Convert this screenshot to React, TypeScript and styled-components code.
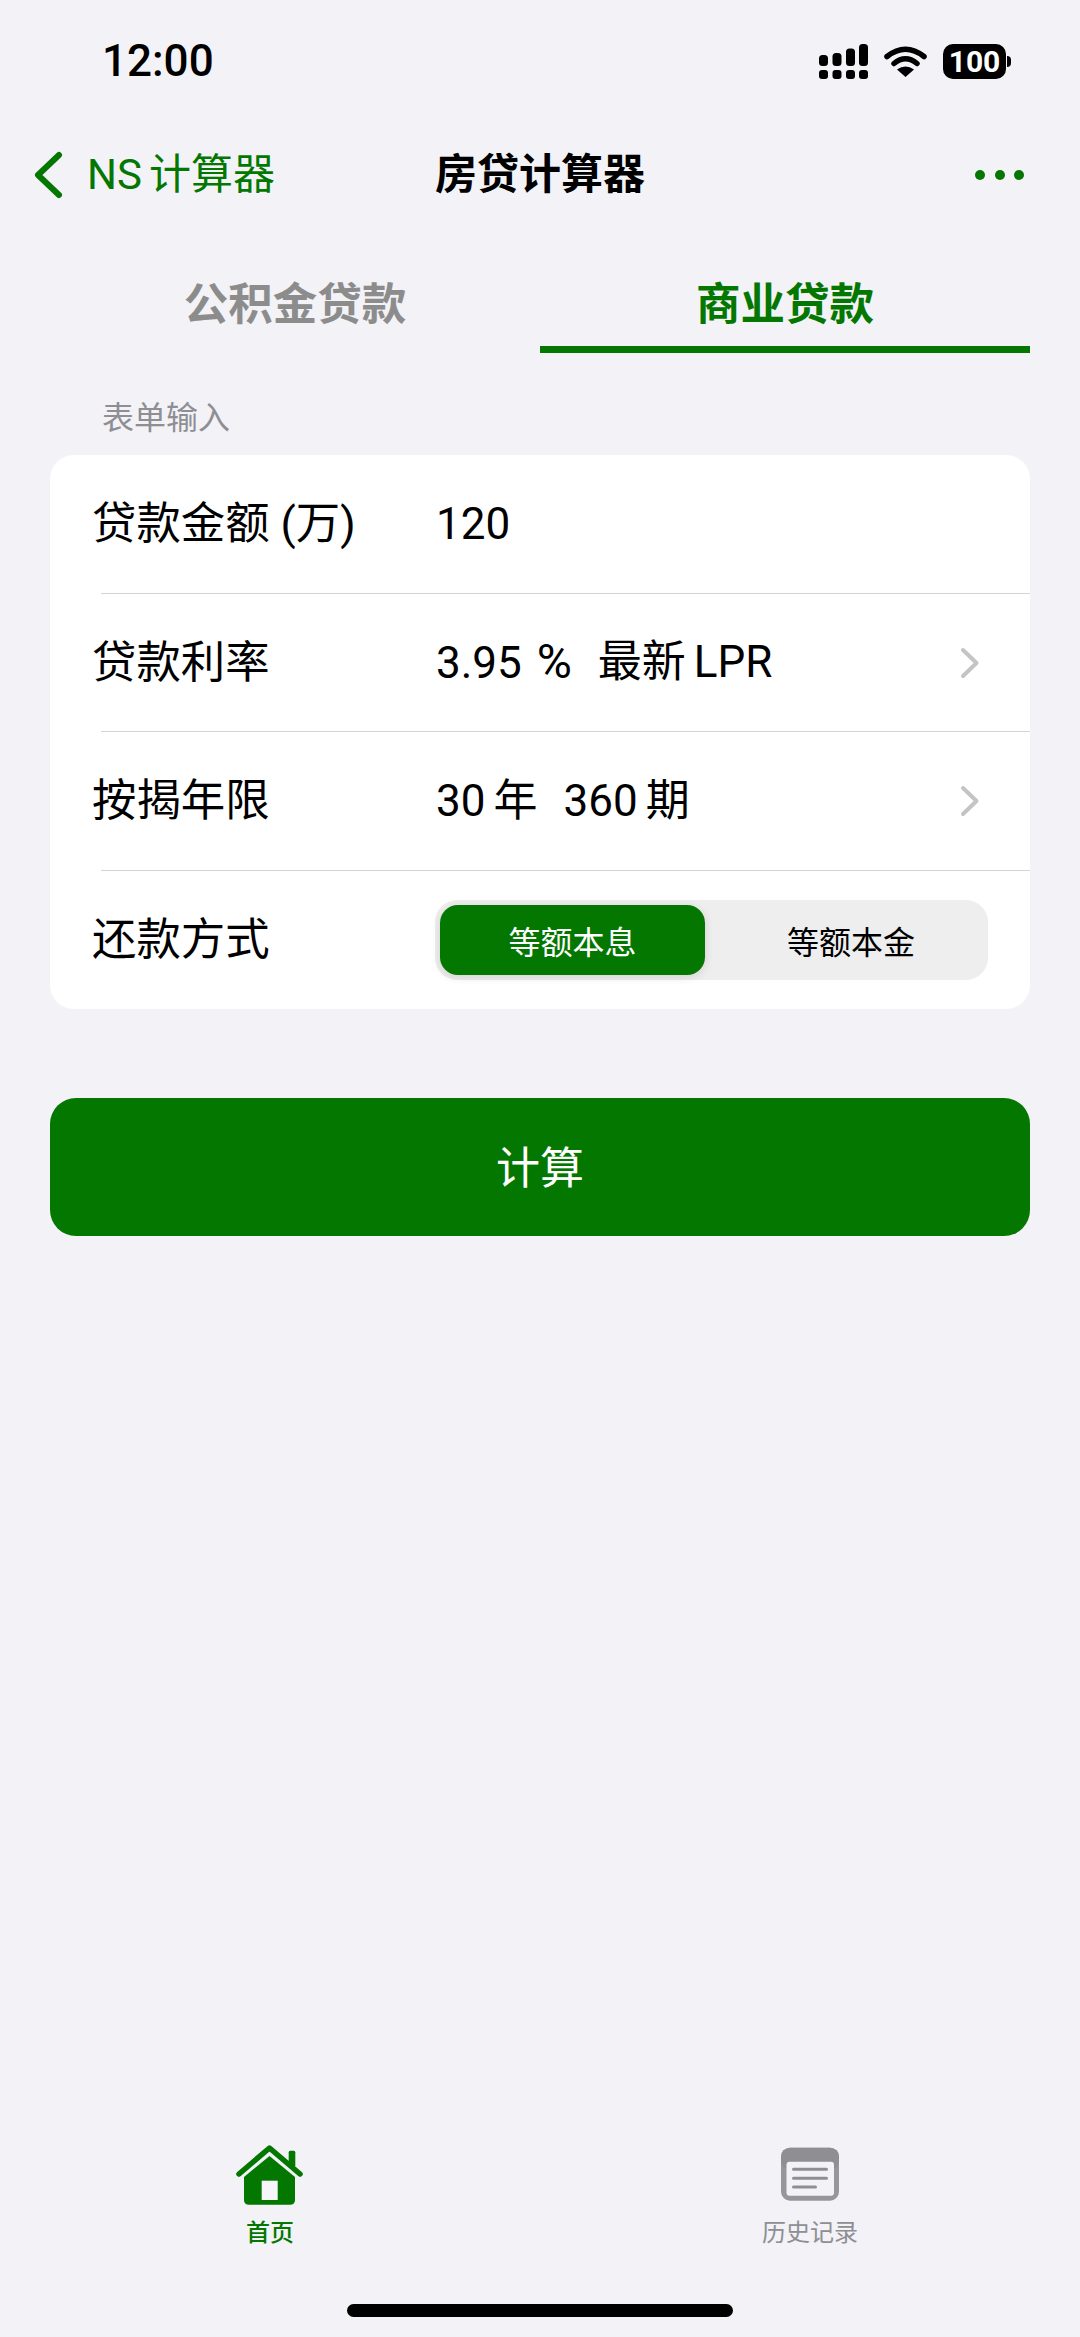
import React from "react";
import styled, { createGlobalStyle } from "styled-components";

const GREEN = "#037700";
const GRAY = "#8e8e93";

const Global = createGlobalStyle`
  html, body { margin: 0; padding: 0; background: #f2f2f7; }
  body { font-family: Roboto, "Noto Sans CJK SC", sans-serif; color: #000; }
  * { box-sizing: border-box; }
`;

const Page = styled.div`
  width: 1080px;
  height: 2337px;
  display: flex;
  flex-direction: column;
  overflow: hidden;
  background: #f2f2f7;
`;

const StatusBar = styled.div`
  height: 122px;
  padding: 0 74px 0 102px;
  display: flex;
  align-items: center;
  justify-content: space-between;
`;
const Time = styled.div`
  font-size: 44px;
  font-weight: 500;
  line-height: 52px;
`;
const StatusIcons = styled.div`
  display: flex;
  align-items: center;
  gap: 16px;
`;
const Battery = styled.div`
  position: relative;
  width: 63px;
  height: 35px;
  border-radius: 10px;
  background: #000;
  color: #fff;
  font-size: 30px;
  font-weight: 700;
  line-height: 35px;
  text-align: center;
  &::after {
    content: "";
    position: absolute;
    left: 64px;
    top: 12px;
    width: 4px;
    height: 11px;
    background: #000;
    border-radius: 0 5px 5px 0;
  }
`;

const Nav = styled.div`
  height: 106px;
  padding: 0 33px;
  display: grid;
  grid-template-columns: 1fr auto 1fr;
  align-items: center;
`;
const Back = styled.div`
  display: flex;
  align-items: center;
  gap: 24px;
  color: ${GREEN};
  font-size: 42px;
  line-height: 50px;
`;
const Title = styled.div`
  font-size: 42px;
  font-weight: 700;
  line-height: 50px;
`;
const Dots = styled.div`
  justify-self: end;
  margin-right: 23px;
  display: flex;
  gap: 9.5px;
`;
const Dot = styled.span`
  width: 10px;
  height: 10px;
  border-radius: 50%;
  background: ${GREEN};
`;
const Spaced = styled.span<{ $gap?: number }>`
  margin-left: ${(p) => p.$gap ?? 8}px;
`;

const Tabs = styled.div`
  margin: 0 50px;
  display: grid;
  grid-template-columns: 1fr 1fr;
`;
const Tab = styled.div<{ $active?: boolean }>`
  padding: 49px 0 13px;
  font-size: 44.5px;
  font-weight: 700;
  line-height: 56px;
  text-align: center;
  color: ${(p) => (p.$active ? GREEN : "#8c8c8c")};
  border-bottom: 7px solid ${(p) => (p.$active ? GREEN : "transparent")};
`;

const SectionLabel = styled.div`
  margin: 43px 0 15px;
  padding-left: 102px;
  font-size: 32px;
  line-height: 44px;
  color: ${GRAY};
`;

const Card = styled.div`
  margin: 0 50px;
  background: #fff;
  border-radius: 24px;
  overflow: hidden;
`;
const Row = styled.div<{ $divider?: boolean }>`
  position: relative;
  height: 138.5px;
  padding: 0 42px 0 42px;
  display: grid;
  grid-template-columns: 343px 1fr;
  align-items: center;
  font-size: 44px;
  &::before {
    content: "";
    display: ${(p) => (p.$divider ? "block" : "none")};
    position: absolute;
    top: -1px;
    left: 51px;
    right: 0;
    height: 1px;
    background: #d4d4d6;
  }
`;
const Label = styled.div`
  font-size: 44.4px;
  line-height: 56px;
`;
const Value = styled.div`
  display: flex;
  align-items: center;
  justify-content: space-between;
  padding: 0 8px 0 1px;
  line-height: 56px;
`;
const ValueGroup = styled.div`
  display: flex;
  gap: 26px;
`;
const Percent = styled.span`
  margin-left: 4px;
  font-size: 48px;
`;
const Segment = styled.div`
  height: 80px;
  padding: 5px;
  display: grid;
  grid-template-columns: 265px 1fr;
  background: #eeeeef;
  border-radius: 22px;
`;
const SegmentItem = styled.div<{ $active?: boolean }>`
  display: flex;
  align-items: center;
  justify-content: center;
  padding-left: ${(p) => (p.$active ? 0 : 14)}px;
  font-size: 32px;
  border-radius: 18px;
  color: ${(p) => (p.$active ? "#fff" : "#000")};
  background: ${(p) => (p.$active ? GREEN : "transparent")};
  box-shadow: ${(p) => (p.$active ? "0 2px 10px rgba(0,0,0,0.12)" : "none")};
`;

const Submit = styled.button`
  margin: 89px 50px 0;
  height: 138px;
  padding: 0 0 5px;
  border: 0;
  border-radius: 26px;
  background: ${GREEN};
  color: #fff;
  font-family: inherit;
  font-size: 44px;
`;

const Spacer = styled.div`
  flex: 1;
`;

const TabBar = styled.div`
  display: grid;
  grid-template-columns: 1fr 1fr;
`;
const TabItem = styled.div<{ $active?: boolean }>`
  display: flex;
  flex-direction: column;
  align-items: center;
  font-size: 24px;
  line-height: 32px;
  font-weight: ${(p) => (p.$active ? 500 : 400)};
  color: ${(p) => (p.$active ? GREEN : "#8e8e93")};
`;
const TabIcon = styled.svg`
  display: block;
  width: 76px;
  height: 70px;
  margin-bottom: 7px;
`;

const HomeArea = styled.div`
  height: 88px;
  padding-top: 55px;
  display: flex;
  justify-content: center;
`;
const HomeBar = styled.div`
  width: 386px;
  height: 13px;
  border-radius: 7px;
  background: #000;
`;

const Chevron = () => (
  <svg width="20" height="32" viewBox="0 0 20 32" fill="none">
    <path d="M3 3 L16.5 16 L3 29" stroke="#c4c4c7" strokeWidth="4" strokeLinecap="round" strokeLinejoin="round" />
  </svg>
);

const SignalIcon = () => (
  <svg width="49" height="35" viewBox="0 0 49 35" fill="#000">
    <rect x="0" y="26" width="9" height="9" rx="3" />
    <rect x="13.5" y="26" width="9" height="9" rx="3" />
    <rect x="27" y="26" width="9" height="9" rx="3" />
    <rect x="40" y="26" width="9" height="9" rx="3" />
    <rect x="0" y="11" width="9" height="11" rx="3.5" />
    <rect x="13.5" y="9" width="9" height="13" rx="3.5" />
    <rect x="27" y="4.5" width="9" height="17.5" rx="3.5" />
    <rect x="40" y="0" width="9" height="22" rx="3.5" />
  </svg>
);

const WifiIcon = () => (
  <svg width="43" height="32" viewBox="0 0 43 32" fill="none">
    <path d="M3 11.5 Q21.5 -3 40 11.5" stroke="#000" strokeWidth="5.5" strokeLinecap="round" />
    <path d="M10 18.5 Q21.5 9 33 18.5" stroke="#000" strokeWidth="5.5" strokeLinecap="round" />
    <path d="M21.5 32 L13 24.5 Q21.5 18.5 30 24.5 Z" fill="#000" />
  </svg>
);

const HomeIcon = () => (
  <TabIcon viewBox="0 0 76 70" fill="none">
    <rect x="56.7" y="10.7" width="6.6" height="16" rx="1.5" fill={GREEN} />
    <path d="M7 34 L37.5 8 L68 34" stroke={GREEN} strokeWidth="5.5" strokeLinecap="round" strokeLinejoin="round" />
    <path d="M37.5 16 L63 37 V60 Q63 64.7 58 64.7 H17 Q12 64.7 12 60 V37 Z" fill={GREEN} />
    <rect x="29.7" y="40.7" width="16" height="19.3" fill="#f6f6fa" />
  </TabIcon>
);

const HistoryIcon = () => (
  <TabIcon viewBox="0 0 76 70" fill="none">
    <rect x="9" y="7.7" width="58" height="53" rx="9" fill="#97979b" />
    <rect x="9" y="7.7" width="58" height="22" rx="9" fill="#8e8e93" />
    <rect x="14.5" y="21.7" width="47.5" height="34" rx="3" fill="#f2f2f7" />
    <path d="M21.5 29.3 H54.5 M21.5 38.3 H54.5 M21.5 47 H43.5" stroke="#8e8e93" strokeWidth="3" strokeLinecap="round" />
  </TabIcon>
);

export default function App() {
  return (
    <Page>
      <Global />
      <StatusBar>
        <Time>12:00</Time>
        <StatusIcons>
          <SignalIcon />
          <WifiIcon />
          <Battery>100</Battery>
        </StatusIcons>
      </StatusBar>
      <Nav>
        <Back>
          <svg width="30" height="48" viewBox="0 0 30 48" fill="none">
            <path d="M26 4 L5 24 L26 44" stroke={GREEN} strokeWidth="6" strokeLinecap="round" strokeLinejoin="round" />
          </svg>
          <span>
            NS<Spaced $gap={7}>计算器</Spaced>
          </span>
        </Back>
        <Title>房贷计算器</Title>
        <Dots>
          <Dot />
          <Dot />
          <Dot />
        </Dots>
      </Nav>
      <Tabs>
        <Tab>公积金贷款</Tab>
        <Tab $active>商业贷款</Tab>
      </Tabs>
      <SectionLabel>表单输入</SectionLabel>
      <Card>
        <Row>
          <Label>贷款金额 (万)</Label>
          <Value>120</Value>
        </Row>
        <Row $divider>
          <Label>贷款利率</Label>
          <Value>
            <ValueGroup>
              <span>
                3.95 <Percent>%</Percent>
              </span>
              <span>
                最新<Spaced>LPR</Spaced>
              </span>
            </ValueGroup>
            <Chevron />
          </Value>
        </Row>
        <Row $divider>
          <Label>按揭年限</Label>
          <Value>
            <ValueGroup>
              <span>
                30<Spaced>年</Spaced>
              </span>
              <span>
                360<Spaced>期</Spaced>
              </span>
            </ValueGroup>
            <Chevron />
          </Value>
        </Row>
        <Row $divider>
          <Label>还款方式</Label>
          <Segment>
            <SegmentItem $active>等额本息</SegmentItem>
            <SegmentItem>等额本金</SegmentItem>
          </Segment>
        </Row>
      </Card>
      <Submit>计算</Submit>
      <Spacer />
      <TabBar>
        <TabItem $active>
          <HomeIcon />
          <span>首页</span>
        </TabItem>
        <TabItem>
          <HistoryIcon />
          <span>历史记录</span>
        </TabItem>
      </TabBar>
      <HomeArea>
        <HomeBar />
      </HomeArea>
    </Page>
  );
}
